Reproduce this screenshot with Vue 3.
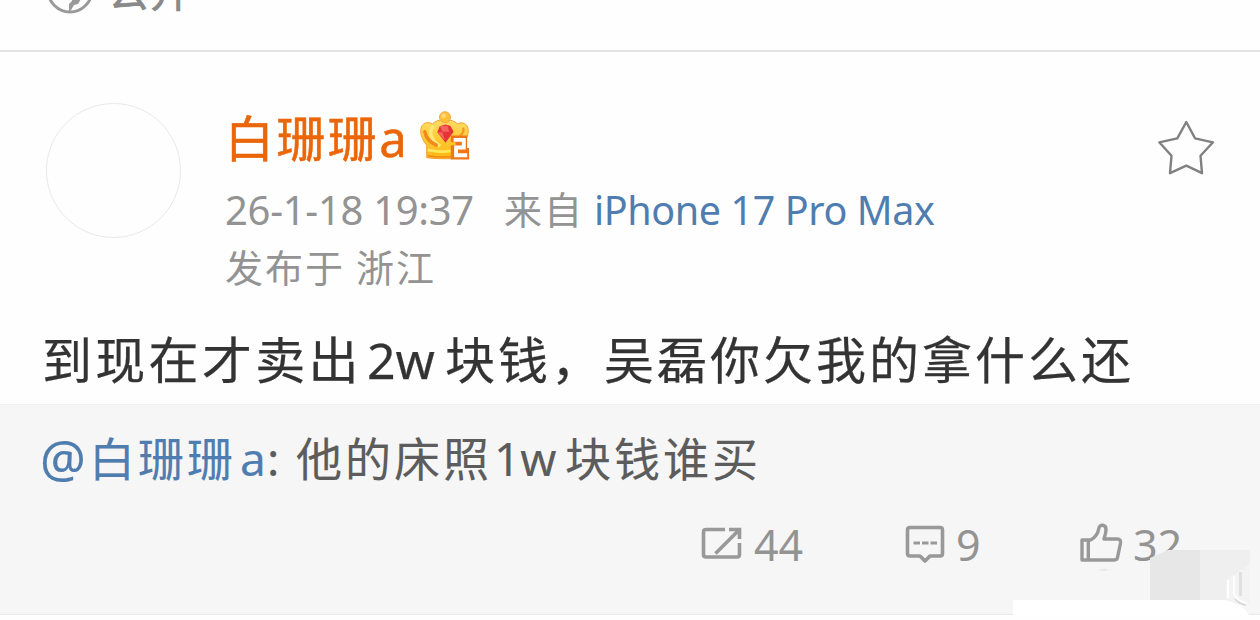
<template>
  <div class="page">
    <div class="visibility">
      <svg class="globe" width="50" height="50" viewBox="0 0 50 50">
        <circle cx="25" cy="25" r="22" fill="none" stroke="#999" stroke-width="3" />
        <path d="M24 47V39l3-3v-4l6-3h8l-5 5-3 5-4 1-3 5z" fill="#999" />
      </svg>
      <span class="visibility-text">公开</span>
    </div>

    <div class="post">
      <div class="header">
        <div class="avatar"></div>
        <div class="user">
          <div class="name-row">
            <span class="name">{{ user }}</span>
            <svg class="crown" width="52" height="53" viewBox="0 0 54 54">
              <defs>
                <linearGradient id="gold" x1="0" y1="0" x2="0" y2="1">
                  <stop offset="0" stop-color="#ffdc66" />
                  <stop offset="0.55" stop-color="#ffc92e" />
                  <stop offset="1" stop-color="#ffb414" />
                </linearGradient>
              </defs>
              <path d="M8 37C3 31 1 25 2 20c1-6 7-8 12-5 5-6 21-6 26 0 5-3 10 0 11 5s-2 12-5 17v13c-10 1.500-28 1.500-38 0z" fill="url(#gold)" stroke="#f2a030" stroke-width="1" />
              <path d="M15 17c-4 5-3 10-1 13 2 4 5 6 8 8" fill="none" stroke="#ffe778" stroke-width="3.5" />
              <path d="M6 23c1 6 5 11 12 14" fill="none" stroke="#f08a1c" stroke-width="3.5" stroke-linecap="round" />
              <path d="M46 20c1 3-1 5-3 7" fill="none" stroke="#f39a22" stroke-width="2.5" stroke-linecap="round" />
              <path d="M9 42c9 2 18 2 24 1" fill="none" stroke="#ffe95a" stroke-width="3" />
              <path d="M9 48c9 1.500 18 1.500 24 1" fill="none" stroke="#f28a18" stroke-width="1.500" />
              <circle cx="27" cy="8" r="5.700" fill="#ffbf38" stroke="#f2a343" stroke-width="1" />
              <circle cx="25.500" cy="6.500" r="2.400" fill="#ffd978" />
              <path d="M21.500 17.500l6-2 5 1.500 3.500 6-8.500 11.500-8.500-11z" fill="#e63338" />
              <path d="M21.500 17.500l3 5.500h7l-2-6zM19 23.500h5.500l2.500 9z" fill="#f4645f" />
              <path d="M35 27h15v13h2v12H33V37h5v-3h-5v-7z" fill="#f1761a" />
              <path d="M36 31.500h10.500v8H38.500v8H50" fill="none" stroke="#fff" stroke-width="4" />
            </svg>
          </div>
          <div class="meta">
            <span class="time">26-1-18 19:37</span>
            <span class="from">来自</span>
            <span class="device">iPhone 17 Pro Max</span>
          </div>
          <div class="meta location">
            <span class="place">发布于</span>
            <span class="city">浙江</span>
          </div>
        </div>
        <svg class="star" width="60" height="60" viewBox="0 0 60 60">
          <path d="M30.300 5L39 21.300l18 4-12.500 13.500 1.500 17.400-15.700-7.500L14 56.200l1.500-17.400L3.300 25.300l18-4z" fill="none" stroke="#808080" stroke-width="2.400" stroke-linejoin="round" />
        </svg>
      </div>
      <div class="content">
        <span class="lead">到现在才卖出</span><span class="num">2w</span><span class="tail">块钱，吴磊你欠我的拿什么还</span>
      </div>
    </div>

    <div class="quote">
      <div class="quote-text">
        <span class="at">@</span><span class="link">白珊珊</span><span class="link-a">a</span><span class="colon">:</span><span class="quote-lead">他的床照</span><span class="quote-num">1w</span><span>块钱谁买</span>
      </div>
      <div class="actions">
        <div class="action repost">
          <svg width="44" height="44" viewBox="0 0 44 44" fill="none" stroke="#999" stroke-width="3.6">
            <path d="M25 6.500H6q-2.500 0-2.500 2.500v22.500q0 2.500 2.500 2.500h31q2.500 0 2.500-2.500V20" />
            <path d="M29 6.500h10.500V16M38.500 7.500L15.500 30.500" />
          </svg>
          <span>{{ reposts }}</span>
        </div>
        <div class="action comment">
          <svg width="44" height="44" viewBox="0 0 44 44" fill="none" stroke="#999" stroke-width="3.6">
            <path d="M8 4.500h30q2.500 0 2.500 2.500v23.500q0 2.500-2.500 2.500H28L23 38l-5-5H8Q5.500 33 5.500 30.500V7q0-2.500 2.500-2.500z" stroke-linejoin="round" />
            <path d="M11.500 20h6.500M20 20h6.500M28.500 20H35" stroke-width="3" />
          </svg>
          <span>{{ comments }}</span>
        </div>
        <div class="action like">
          <svg width="46" height="44" viewBox="0 0 46 44" fill="none" stroke="#999" stroke-width="3.4" stroke-linejoin="round">
            <path d="M4 17H12.500q7-3.500 8.300-11.500c.7-5 7.200-4 7.200 1 0 3.500-1 6-2 9.500h13.500q3.500 0 3 4l-3 14.500q-.500 2.500-3 2.500H4z" />
            <path d="M10.300 17v20" />
          </svg>
          <span>{{ likes }}</span>
        </div>
      </div>
      <svg class="mosaic" width="260" height="120" viewBox="0 0 260 120">
        <path d="M142 65L154 58 170 50.500h15v20h-43z" fill="#f6f6f6" />
        <path d="M98 70q7-3 11 0-5 2-11 0z" fill="#e8e8e8" />
        <path d="M150 58l18-8h32v50h-50z" fill="#e7e7e7" />
        <path d="M200 50h50v14l-14 36h-36z" fill="#efefef" />
        <path d="M226 80l24-16v40h-24z" fill="#f3f3f3" />
        <path d="M239 72h3v24h-3z" fill="#e0e0e0" />
        <path d="M228 80v18M234 76v17q2 8 13 10" fill="none" stroke="#fff" stroke-width="2" />
        <path d="M235 99q4 5 11 6" fill="none" stroke="#d6d6d6" stroke-width="1.5" />
        <path d="M13 100h212q18 4 24 15H13z" fill="#fff" />
      </svg>
    </div>
  </div>
</template>

<script setup>
import { ref } from 'vue'

const user = ref('白珊珊a')
const reposts = ref(44)
const comments = ref(9)
const likes = ref(32)
</script>

<style>
body {
  background: #fff;
}
</style>

<style scoped>
.page {
  width: 1260px;
  height: 620px;
  overflow: hidden;
  background: #fefefe;
  font-family: "Noto Sans", "Noto Sans CJK SC", sans-serif;
  color: #333;
}
span {
  white-space: nowrap;
}
svg {
  display: block;
  flex: none;
}
.visibility {
  box-sizing: border-box;
  height: 52px;
  border-bottom: 2px solid #e3e3e3;
  display: flex;
  padding-left: 45px;
  overflow: hidden;
}
.globe {
  margin-top: -35px;
}
.visibility-text {
  margin: -34px 0 0 13px;
  font-size: 41px;
  line-height: 50px;
  letter-spacing: 1px;
  color: #888;
  -webkit-text-stroke: 0.7px currentColor;
}
.post {
  box-sizing: border-box;
  height: 352px;
  padding: 51px 44px 0 46px;
}
.header {
  display: flex;
  height: 222px;
}
.avatar {
  box-sizing: border-box;
  width: 135px;
  height: 135px;
  border: 1px solid #e9e9e9;
  border-radius: 50%;
}
.user {
  flex: 1;
  margin-left: 44px;
}
.name-row {
  display: flex;
  height: 78px;
}
.name {
  width: 184px;
  font-size: 49px;
  line-height: 70px;
  letter-spacing: 2.4px;
  color: #eb6509;
  -webkit-text-stroke: 0.5px currentColor;
}
.crown {
  margin: 6px 0 0 10px;
}
.meta {
  display: flex;
  height: 58px;
  line-height: 58px;
  font-size: 38px;
  color: #939393;
}
.location {
  height: 56px;
  line-height: 56px;
}
.time {
  width: 279px;
  font-size: 40px;
  letter-spacing: -0.3px;
}
.from {
  width: 90px;
  line-height: 56px;
  letter-spacing: 2px;
}
.device {
  font-size: 39.5px;
  letter-spacing: -0.4px;
  color: #507daf;
}
.place {
  width: 131px;
  letter-spacing: 2px;
}
.city {
  letter-spacing: 2px;
}
.star {
  margin-top: 14px;
}
.content {
  display: flex;
  margin-left: -4px;
  font-size: 50px;
  line-height: 70px;
  letter-spacing: 3.3px;
  -webkit-text-stroke: 0.25px currentColor;
}
.lead {
  width: 325px;
}
.num {
  width: 78px;
  letter-spacing: 0;
}
.tail {
  letter-spacing: 3px;
}
.quote {
  position: relative;
  box-sizing: border-box;
  height: 211px;
  padding-top: 20px;
  background: #f6f6f6;
  border-top: 1px solid #f1f1f1;
  border-bottom: 1px solid #e9e9e9;
}
.quote-text {
  display: flex;
  height: 66px;
  padding-left: 40px;
  font-size: 46px;
  line-height: 66px;
  letter-spacing: 3px;
  color: #5c5c5c;
  -webkit-text-stroke: 0.15px currentColor;
}
.at,
.link,
.link-a {
  color: #507daf;
}
.at {
  width: 49px;
  font-size: 51px;
}
.link {
  width: 151px;
}
.link-a {
  width: 27px;
}
.colon {
  width: 29px;
}
.quote-lead {
  width: 198px;
}
.quote-num {
  width: 71px;
  letter-spacing: 0;
}
.actions {
  display: flex;
  align-items: center;
  height: 66px;
  margin-top: 21px;
  padding-left: 700px;
}
.action {
  display: flex;
  align-items: center;
  gap: 10px;
  font-size: 43px;
  line-height: 68px;
  color: #939393;
}
.repost {
  width: 202px;
}
.comment {
  width: 176px;
}
.like {
  gap: 9px;
}
.mosaic {
  position: absolute;
  left: 1000px;
  top: 95px;
}
</style>
